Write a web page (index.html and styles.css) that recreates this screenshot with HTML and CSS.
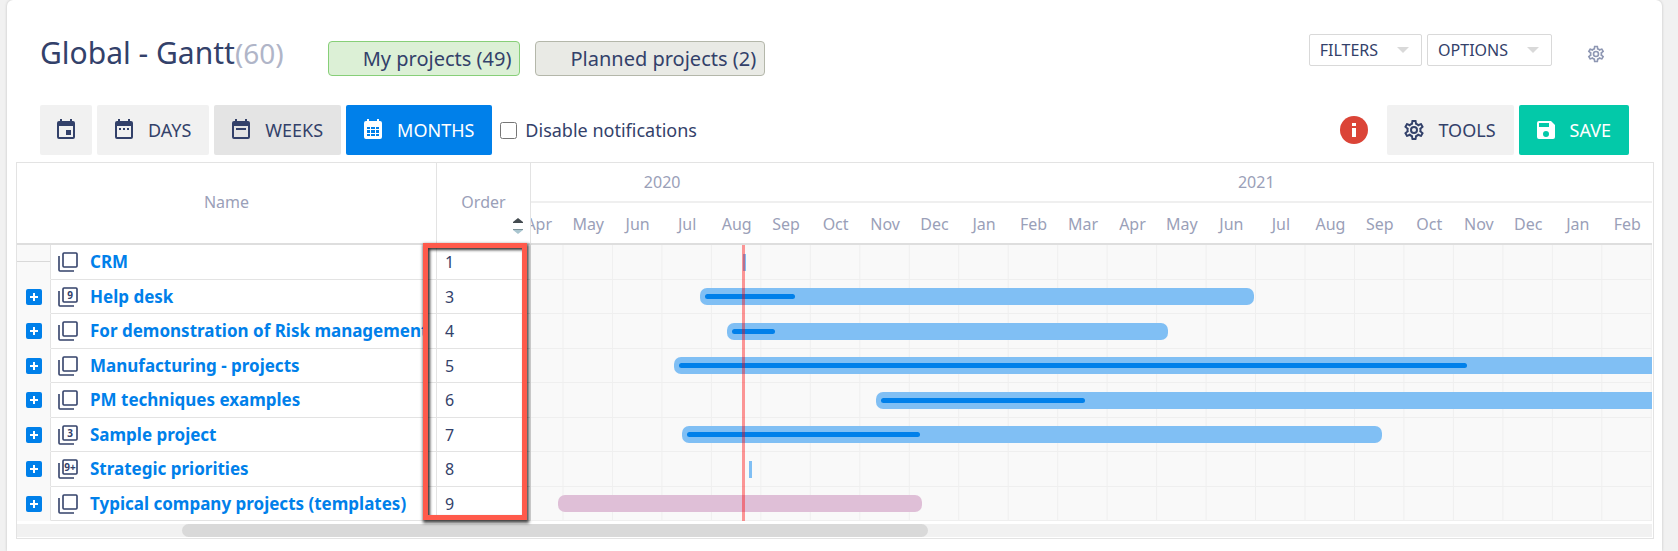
FILE: index.html
```html
<!DOCTYPE html>
<html lang="en">
<head>
  <meta charset="utf-8">
  <title>Global - Gantt</title>
  <link rel="stylesheet" href="styles.css">
</head>
<body>

<svg class="sprite" aria-hidden="true">
  <symbol id="cal-frame" viewBox="0 0 24 24">
    <path fill-rule="evenodd" d="M16 1v2H8V1H6v2H5a2 2 0 0 0-2 2v14a2 2 0 0 0 2 2h14a2 2 0 0 0 2-2V5a2 2 0 0 0-2-2h-1V1zM5 8h14v11H5z"/>
  </symbol>
  <symbol id="gear" viewBox="0 0 24 24">
    <path d="M12 8a4 4 0 1 1 0 8 4 4 0 0 1 0-8m0 2a2 2 0 1 0 0 4 2 2 0 0 0 0-4m-2 12c-.25 0-.46-.18-.5-.42l-.37-2.65c-.63-.25-1.17-.59-1.69-.99l-2.49 1.01c-.22.08-.49 0-.61-.22l-2-3.46a.493.493 0 0 1 .12-.64l2.11-1.66L4.5 12l.07-1-2.11-1.63a.493.493 0 0 1-.12-.64l2-3.46c.12-.22.39-.31.61-.22l2.49 1c.52-.39 1.06-.73 1.69-.98l.37-2.65c.04-.24.25-.42.5-.42h4c.25 0 .46.18.5.42l.37 2.65c.63.25 1.17.59 1.69.98l2.49-1c.22-.09.49 0 .61.22l2 3.46c.13.22.07.49-.12.64L19.43 11l.07 1-.07 1 2.11 1.63c.19.15.25.42.12.64l-2 3.46c-.12.22-.39.31-.61.22l-2.49-1c-.52.39-1.06.73-1.69.98l-.37 2.65c-.04.24-.25.42-.5.42zm1.25-18-.37 2.61c-1.2.25-2.26.89-3.03 1.78L5.44 7.35l-.75 1.3L6.8 10.2a5.55 5.55 0 0 0 0 3.6l-2.12 1.56.75 1.3 2.43-1.04c.77.88 1.82 1.52 3.01 1.76l.37 2.62h1.52l.37-2.61c1.19-.25 2.24-.89 3.01-1.77l2.43 1.04.75-1.3-2.12-1.55c.4-1.17.4-2.44 0-3.61l2.11-1.55-.75-1.3-2.41 1.04a5.42 5.42 0 0 0-3.03-1.77L12.75 4z"/>
  </symbol>
  <symbol id="stack" viewBox="0 0 20 20">
    <rect x="5" y="1" width="14" height="14" rx="1" fill="none" stroke="currentColor" stroke-width="1.6"/>
    <path d="M1 4v14a1 1 0 0 0 1 1h14" fill="none" stroke="currentColor" stroke-width="1.6"/>
  </symbol>
  <symbol id="plus" viewBox="0 0 16 16">
    <path d="M7 4h2v3h3v2H9v3H7V9H4V7h3z"/>
  </symbol>
</svg>

<main class="card">

  <header class="page-head">
    <h1>Global - Gantt<span class="count">(60)</span></h1>
    <a class="tag tag-green" href="#">My projects (49)</a>
    <a class="tag tag-gray" href="#">Planned projects (2)</a>
    <div class="head-actions">
      <button class="dropdown" type="button">FILTERS <svg viewBox="0 0 12 6"><path d="M0 0h12L6 6z"/></svg></button>
      <button class="dropdown" type="button">OPTIONS <svg viewBox="0 0 12 6"><path d="M0 0h12L6 6z"/></svg></button>
      <button class="settings" type="button" aria-label="Settings"><svg><use href="#gear"/></svg></button>
    </div>
  </header>

  <div class="toolbar">
    <button class="btn btn-icon" type="button" aria-label="Today">
      <svg viewBox="0 0 24 24"><use href="#cal-frame"/><path d="M12 12h5v5h-5z"/></svg>
    </button>
    <button class="btn" type="button">
      <svg viewBox="0 0 24 24"><use href="#cal-frame"/><path d="M7 10h2v2H7zM11 10h2v2h-2zM15 10h2v2h-2z"/></svg>
      DAYS
    </button>
    <button class="btn btn-hover" type="button">
      <svg viewBox="0 0 24 24"><use href="#cal-frame"/><path d="M7 10h10v2H7z"/></svg>
      WEEKS
    </button>
    <button class="btn btn-blue" type="button">
      <svg viewBox="0 0 24 24"><path fill-rule="evenodd" d="M16 1v2H8V1H6v2H5a2 2 0 0 0-2 2v14a2 2 0 0 0 2 2h14a2 2 0 0 0 2-2V5a2 2 0 0 0-2-2h-1V1zM6 9h12v9H6z"/><path d="M9 9h1v9H9zM14 9h1v9h-1zM6 11h12v1H6zM6 15h12v1H6z"/></svg>
      MONTHS
    </button>
    <label class="check"><input type="checkbox"> Disable notifications</label>

    <div class="toolbar-right">
      <svg class="info" viewBox="0 0 28 28"><circle cx="14" cy="14" r="14"/><path d="M12 7h4v3h-4zM12 12h4v9h-4z"/></svg>
      <button class="btn" type="button"><svg><use href="#gear"/></svg> TOOLS</button>
      <button class="btn btn-teal" type="button">
        <svg viewBox="0 0 24 24"><path fill-rule="evenodd" d="M17 3H5a2 2 0 0 0-2 2v14a2 2 0 0 0 2 2h14a2 2 0 0 0 2-2V7zm-5 16a3 3 0 1 1 0-6 3 3 0 0 1 0 6zm3-10H5V5h10z"/></svg>
        SAVE
      </button>
    </div>
  </div>

  <section class="gantt">
    <div class="gantt-body">

      <div class="grid-pane">
        <table class="projects">
          <colgroup>
            <col class="col-tree">
            <col>
            <col class="col-order">
          </colgroup>
          <thead>
            <tr>
              <th colspan="2">Name</th>
              <th class="order">Order
                <svg class="sort" viewBox="0 0 10 16"><path d="M5 0l5 4v1H0V4z" fill="#444b50"/><path d="M0 11h10v1l-5 4-5-4z" fill="#a9c5cf"/><path d="M0 11h10v1H0z" fill="#7d9299"/></svg>
              </th>
            </tr>
          </thead>
          <tbody>
            <tr>
              <td class="tree leaf"></td>
              <td class="name"><div><svg class="stack"><use href="#stack"/></svg><a href="#">CRM</a></div></td>
              <td class="order">1</td>
            </tr>
            <tr>
              <td class="tree"><button type="button" aria-label="Expand"><svg><use href="#plus"/></svg></button></td>
              <td class="name"><div><svg class="stack" viewBox="0 0 20 20"><use href="#stack"/><text x="12" y="12">9</text></svg><a href="#">Help desk</a></div></td>
              <td class="order">3</td>
            </tr>
            <tr>
              <td class="tree"><button type="button" aria-label="Expand"><svg><use href="#plus"/></svg></button></td>
              <td class="name"><div><svg class="stack"><use href="#stack"/></svg><a href="#">For demonstration of Risk management</a></div></td>
              <td class="order">4</td>
            </tr>
            <tr>
              <td class="tree"><button type="button" aria-label="Expand"><svg><use href="#plus"/></svg></button></td>
              <td class="name"><div><svg class="stack"><use href="#stack"/></svg><a href="#">Manufacturing - projects</a></div></td>
              <td class="order">5</td>
            </tr>
            <tr>
              <td class="tree"><button type="button" aria-label="Expand"><svg><use href="#plus"/></svg></button></td>
              <td class="name"><div><svg class="stack"><use href="#stack"/></svg><a href="#">PM techniques examples</a></div></td>
              <td class="order">6</td>
            </tr>
            <tr>
              <td class="tree"><button type="button" aria-label="Expand"><svg><use href="#plus"/></svg></button></td>
              <td class="name"><div><svg class="stack" viewBox="0 0 20 20"><use href="#stack"/><text x="12" y="12">3</text></svg><a href="#">Sample project</a></div></td>
              <td class="order">7</td>
            </tr>
            <tr>
              <td class="tree"><button type="button" aria-label="Expand"><svg><use href="#plus"/></svg></button></td>
              <td class="name"><div><svg class="stack" viewBox="0 0 20 20"><use href="#stack"/><text x="12" y="12">9+</text></svg><a href="#">Strategic priorities</a></div></td>
              <td class="order">8</td>
            </tr>
            <tr>
              <td class="tree"><button type="button" aria-label="Expand"><svg><use href="#plus"/></svg></button></td>
              <td class="name"><div><svg class="stack"><use href="#stack"/></svg><a href="#">Typical company projects (templates)</a></div></td>
              <td class="order">9</td>
            </tr>
          </tbody>
        </table>
        <div class="highlight"></div>
      </div>

      <div class="timeline">
        <div class="years"><span>2020</span><span>2021</span></div>
        <div class="months">
          <span>Apr</span><span>May</span><span>Jun</span><span>Jul</span><span>Aug</span><span>Sep</span><span>Oct</span><span>Nov</span><span>Dec</span>
          <span>Jan</span><span>Feb</span><span>Mar</span><span>Apr</span><span>May</span><span>Jun</span><span>Jul</span><span>Aug</span><span>Sep</span><span>Oct</span><span>Nov</span><span>Dec</span>
          <span>Jan</span><span>Feb</span>
        </div>
        <div class="bars">
          <div class="row"><div class="bar mark" style="margin-left:20.16%"></div></div>
          <div class="row"><div class="bar" style="margin-left:16.38%;width:48.66%"><i style="width:16.5%"></i></div></div>
          <div class="row"><div class="bar" style="margin-left:18.75%;width:38.74%"><i style="width:10%"></i></div></div>
          <div class="row"><div class="bar open" style="margin-left:14.1%;width:85.9%"><i style="width:81.4%"></i></div></div>
          <div class="row"><div class="bar open" style="margin-left:31.84%;width:68.16%"><i style="width:26.6%"></i></div></div>
          <div class="row"><div class="bar" style="margin-left:14.8%;width:61.48%"><i style="width:33.7%"></i></div></div>
          <div class="row"><div class="bar mark" style="margin-left:20.69%"></div></div>
          <div class="row"><div class="bar template" style="margin-left:3.91%;width:31.97%"></div></div>
          <div class="today" style="left:20.07%"></div>
        </div>
      </div>

    </div>
    <div class="scroll"><div class="thumb" style="margin-left:10.1%;width:45.6%"></div></div>
  </section>

</main>

</body>
</html>
```

FILE: styles.css
```css
* {
  box-sizing: border-box;
}

body {
  margin: 0;
  padding: 0 16px 0 7px;
  background: #f1f1f1;
  color: #33416a;
  font-family: "Noto Sans", sans-serif;
  font-size: 16px;
  line-height: 20px;
}

a {
  text-decoration: none;
}

button {
  font: inherit;
  color: inherit;
  border: 0;
  padding: 0;
  cursor: pointer;
}

svg {
  fill: currentColor;
  flex: none;
}

.sprite {
  display: none;
}

.card {
  min-height: 100vh;
  padding: 34px 8px 12px 9px;
  background: #fff;
  border-radius: 6px 6px 0 0;
  box-shadow: 0 0 3px rgba(0, 0, 0, .2);
}

/* title row */
.page-head {
  display: flex;
  align-items: flex-start;
  padding: 0 24px;
  height: 71px;
}

h1 {
  margin: 0 44px 0 0;
  font-size: 30px;
  line-height: 38px;
  font-weight: 400;
}

.count {
  color: #b0b5c8;
  font-size: 28px;
}

.tag {
  height: 35px;
  margin: 7px 15px 0 0;
  padding: 0 8px 0 34px;
  border: 1px solid;
  border-radius: 4px;
  color: #33416a;
  font-size: 20px;
  line-height: 34px;
}

.tag-green {
  background: #dcf0d6;
  border-color: #87cf78;
}

.tag-gray {
  background: #e9eae5;
  border-color: #b4b7aa;
}

.head-actions {
  display: flex;
  gap: 5px;
  margin-left: auto;
}

.dropdown {
  display: flex;
  align-items: center;
  gap: 19px;
  height: 32px;
  padding: 0 12px 0 10px;
  background: #fff;
  border: 1px solid #d9d9d9;
  border-radius: 2px;
}

.dropdown svg {
  width: 12px;
  height: 6px;
  fill: #d9d9d9;
}

.settings {
  margin: 8px 24px 0 29px;
  background: none;
  color: #8e97b3;
}

.settings svg {
  display: block;
  width: 20px;
  height: 20px;
}

/* toolbar */
.toolbar {
  display: flex;
  align-items: center;
  gap: 5px;
  padding: 0 25px 0 24px;
}

.btn {
  display: flex;
  align-items: center;
  gap: 12px;
  height: 50px;
  padding: 0 18px 0 15px;
  background: #f1f1f1;
  border-radius: 2px;
  font-size: 18px;
}

.btn svg {
  width: 24px;
  height: 24px;
}

.btn-icon {
  padding: 0 14px;
}

.btn-hover {
  background: #e4e4e4;
}

.btn-blue {
  background: #0080ea;
  color: #fff;
}

.btn-teal {
  background: #03c9a9;
  color: #fff;
}

.check {
  display: flex;
  align-items: center;
  gap: 8px;
  margin-left: 3px;
  font-size: 18px;
}

.check input {
  width: 17px;
  height: 17px;
  margin: 0;
}

.toolbar-right {
  display: flex;
  align-items: center;
  gap: 5px;
  margin-left: auto;
}

.info {
  width: 28px;
  height: 28px;
  margin-right: 14px;
}

.info circle {
  fill: #db4437;
}

.info path {
  fill: #fff;
}

/* gantt */
.gantt {
  margin-top: 7px;
  border: 1px solid #e3e3e3;
}

.gantt-body {
  display: flex;
}

.grid-pane {
  position: relative;
  flex: none;
  width: 514px;
}

.projects {
  width: 100%;
  table-layout: fixed;
  border-collapse: separate;
  border-spacing: 0;
}

.col-tree {
  width: 34px;
}

.col-order {
  width: 94px;
}

.projects th {
  height: 82px;
  padding: 0 0 2px;
  border-right: 1px solid #e3e3e3;
  border-bottom: 2px solid #dedede;
  color: #9aa0b8;
  font-weight: 400;
}

.projects th.order {
  position: relative;
}

.sort {
  position: absolute;
  right: 7px;
  bottom: 9px;
  width: 10px;
  height: 16px;
}

.projects td {
  height: 34px;
  padding: 0;
  border-right: 1px solid #e3e3e3;
  border-bottom: 1px solid #e3e3e3;
}

.projects tr:nth-child(odd) td {
  height: 35px;
}

.projects td.tree {
  background: #f9f9f9;
  border-bottom-color: #f9f9f9;
}

.tree button {
  display: block;
  width: 16px;
  height: 16px;
  margin: 0 auto;
  background: #0080ea;
  border-radius: 2px;
  color: #fff;
}

.tree svg {
  display: block;
  width: 16px;
  height: 16px;
}

.projects td.leaf {
  background: linear-gradient(#d9d9d9, #d9d9d9) 0 16px / 100% 1px no-repeat #f9f9f9;
}

.projects td.name {
  padding-right: 11px;
}

.name div {
  display: flex;
  align-items: center;
  gap: 12px;
  padding-left: 7px;
  overflow: hidden;
  white-space: nowrap;
}

.name a {
  color: #0080ea;
  font-size: 17px;
  line-height: 26px;
  font-weight: 700;
}

.stack {
  width: 20px;
  height: 20px;
}

.stack text {
  font-size: 10px;
  font-weight: 700;
  text-anchor: middle;
}

.projects td.order {
  padding-left: 8px;
}

/* red frame around the order values */
.highlight {
  position: absolute;
  top: 80px;
  right: 4px;
  bottom: 1px;
  width: 104px;
  border: 5px solid #ff5a4b;
  box-shadow: 1px 2px 3px 1px rgba(0, 0, 0, .7), inset 2px 2px 3px rgba(0, 0, 0, .8);
}

.timeline {
  flex: 1;
  min-width: 0;
  margin-right: 1px;
  overflow: hidden;
  color: #9aa0b8;
}

.years {
  display: flex;
  height: 40px;
  border-bottom: 2px solid #efefef;
}

/* the strip starts in the middle of April, January is three months to the left */
.years span {
  flex: none;
  width: 53%;
  line-height: 38px;
  text-align: center;
}

.years span:first-child {
  margin-left: -14.8%;
}

.months {
  display: grid;
  grid-template-columns: repeat(23, minmax(0, 1fr));
  height: 42px;
  margin-left: -17px;
  border-bottom: 2px solid #dedede;
}

.months span {
  line-height: 42px;
  text-align: center;
}

.bars {
  position: relative;
  margin-left: -17px;
  background-color: #f9f9f9;
  background-image: linear-gradient(to left, #efefef 1px, transparent 1px);
  background-size: calc(100% / 23) 100%;
}

.row {
  display: flex;
  align-items: center;
  height: 34px;
  border-bottom: 1px solid #efefef;
}

.row:nth-child(odd) {
  height: 35px;
}

.bar {
  display: flex;
  align-items: center;
  height: 17px;
  padding: 0 5px;
  background: #80bff4;
  border-radius: 7px;
}

.bar i {
  height: 5px;
  background: #0080ea;
  border-radius: 3px;
}

.bar.open {
  border-radius: 7px 0 0 7px;
}

.bar.mark {
  width: 3px;
  padding: 0;
  border-radius: 0;
}

.bar.template {
  background: #dfbfd7;
}

.today {
  position: absolute;
  top: 0;
  bottom: 0;
  width: 3px;
  background: rgba(255, 0, 0, .4);
}

.scroll {
  margin: 3px 1px 1px 0;
  background: #f1f1f1;
}

.thumb {
  height: 13px;
  background: #d9d9d9;
  border-radius: 7px;
}
```
